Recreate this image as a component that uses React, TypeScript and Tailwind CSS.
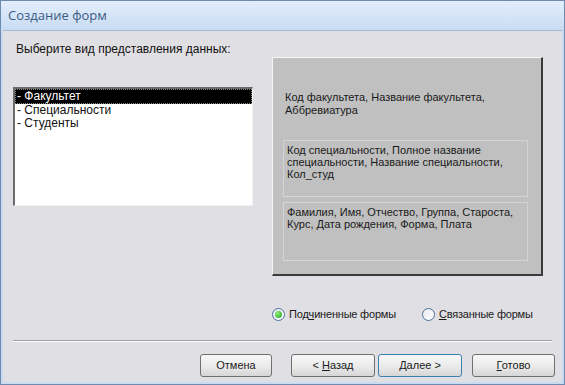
import React from 'react';

const font = { fontFamily: 'Tahoma, "Liberation Sans", "DejaVu Sans", sans-serif' };

const Radio: React.FC<{ checked?: boolean; children: React.ReactNode }> = ({ checked, children }) => (
  <label className="flex items-center gap-[4px] text-[11px] tracking-[-0.2px] text-[#1a1a1a]">
    <span className="w-[13px] h-[13px] rounded-full border border-[#4f6f98] bg-gradient-to-br from-[#e4e8ee] to-white flex items-center justify-center">
      {checked && <span className="w-[7px] h-[7px] rounded-full bg-[radial-gradient(circle_at_35%_35%,#8ff07a,#1f9a1f)]" />}
    </span>
    {children}
  </label>
);

const Button: React.FC<{ children: React.ReactNode; className?: string; active?: boolean }> = ({ children, className, active }) => (
  <button
    className={
      'h-[23px] rounded-[3px] border text-[11px] text-[#1a1a1a] bg-gradient-to-b from-[#f7f7f7] via-[#ececec] to-[#d6d6d6] ' +
      (active ? 'border-[#3c7fb1] ' : 'border-[#707070] ') +
      (className ?? '')
    }
  >
    {children}
  </button>
);

export default function App() {
  return (
    <div style={font} className="w-[565px] h-[385px] bg-[#c9dbf0] border border-[#6e8aae] flex flex-col overflow-hidden">
      <div className="h-[29px] flex items-center pl-[7px] bg-gradient-to-b from-[#e3eefb] to-[#c9dcf3]">
        <span style={{ fontFamily: '"Open Sans", "Liberation Sans", sans-serif' }} className="text-[13px] text-[#3b5b86]">
          Создание форм
        </span>
      </div>
      <div className="flex-1 mx-[2px] mb-[2px] bg-[#e0dfe3] border-t border-[#a9b8cc] flex flex-col">
        <div className="pl-[13px] pt-[12px] text-[12px] leading-[13px] text-[#111]">Выберите вид представления данных:</div>
        <div className="flex pl-[10px] pt-[1px]">
          <div className="w-[240px] pt-[30px]">
            <div className="h-[119px] bg-white border-l-2 border-t-2 border-[#6b6b6b] border-r border-b border-r-[#f0f0f0] border-b-[#f0f0f0] text-[12px] leading-[13px]">
              <div className="bg-black text-white pl-[1px] border border-dotted border-[#888]">- Факультет</div>
              <div className="pl-[2px] text-[#111]">- Специальности</div>
              <div className="pl-[2px] text-[#111]">- Студенты</div>
            </div>
          </div>
          <div className="ml-[19px] w-[271px] h-[219px] bg-[#c0c0c0] border-t border-l border-[#f4f4f4] border-r-2 border-b-2 border-r-[#3a3a3a] border-b-[#3a3a3a] text-[11px] leading-[13px] text-[#1a1a1a] flex flex-col">
            <div className="pl-[12px] pt-[33px] pr-[8px] h-[82px]">
              Код факультета, Название факультета,
              <br />
              Аббревиатура
            </div>
            <div className="ml-[10px] mr-[13px] h-[57px] border border-[#d4d4d4] pl-[3px] pt-[3px] leading-[12px]">
              Код специальности, Полное название
              <br />
              специальности, Название специальности,
              <br />
              Кол_студ
            </div>
            <div className="ml-[10px] mr-[13px] mt-[5px] h-[59px] border border-[#d4d4d4] pl-[3px] pt-[3px] leading-[12px]">
              Фамилия, Имя, Отчество, Группа, Староста,
              <br />
              Курс, Дата рождения, Форма, Плата
            </div>
          </div>
        </div>
        <div className="flex pl-[269px] pt-[30px] gap-[26px]">
          <Radio checked>
            <span>
              Под<u>ч</u>иненные формы
            </span>
          </Radio>
          <Radio>
            <span>
              <u>С</u>вязанные формы
            </span>
          </Radio>
        </div>
        <div className="mx-[10px] mt-[17px] border-t border-[#a0a0a0] border-b border-b-white" />
        <div className="flex pl-[197px] pt-[12px]">
          <Button className="w-[72px]">Отмена</Button>
          <Button className="w-[84px] ml-[19px]">
            &lt; <u>Н</u>азад
          </Button>
          <Button className="w-[84px] ml-[3px]" active>
            <u>Д</u>алее &gt;
          </Button>
          <Button className="w-[83px] ml-[10px]">
            <u>Г</u>отово
          </Button>
        </div>
      </div>
    </div>
  );
}
